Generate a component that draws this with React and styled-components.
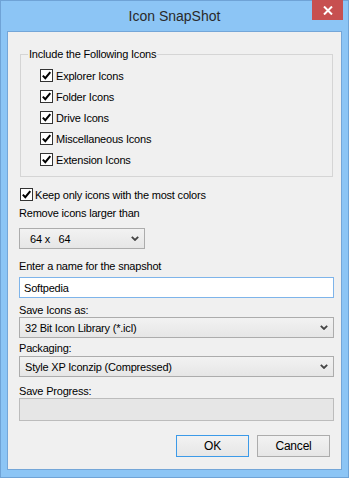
import styled, { createGlobalStyle } from "styled-components";

const Global = createGlobalStyle`
  html, body { margin: 0; padding: 0; background: #8cc5f5; }
  * { box-sizing: border-box; }
`;

const Window = styled.div`
  width: 349px;
  height: 478px;
  background: #8cc5f5;
  border: 1px solid #6fa3d6;
  display: flex;
  flex-direction: column;
  font-family: "Liberation Sans", Arial, sans-serif;
  font-size: 11px;
  letter-spacing: -0.2px;
  color: #000;
`;

const TitleBar = styled.div`
  position: relative;
  height: 30px;
  display: flex;
  align-items: center;
  justify-content: center;
  padding-bottom: 1px;
`;

const Title = styled.div`
  font-size: 14px;
  letter-spacing: 0;
  color: #2a2a2a;
`;

const Close = styled.div`
  position: absolute;
  top: -1px;
  right: 5px;
  width: 31px;
  height: 20px;
  background: #c75050;
  display: flex;
  align-items: center;
  justify-content: center;
`;

const Client = styled.div`
  width: 335px;
  height: 439px;
  margin-left: 6px;
  background: #f0f0f0;
  border: 1px solid #74a6d8;
  padding: 0 7px 0 11px;
  display: flex;
  flex-direction: column;
`;

const Group = styled.fieldset`
  margin: 15px 1px 0 1px;
  padding: 4px 0 6px 0;
  border: 1px solid #d5d5d5;
  min-width: 0;
`;

const Legend = styled.legend`
  padding: 0 1px;
  margin-left: 7px;
  line-height: 14px;
`;

const CheckRow = styled.label`
  display: flex;
  align-items: center;
  height: 21px;
  gap: ${(p) => p.$gap || 3}px;
  margin-top: ${(p) => p.$mt || 0}px;
  margin-left: ${(p) => p.$ml || 0}px;
`;

const Box = styled.span`
  width: 13px;
  height: 13px;
  border: 1px solid #333;
  background: #fff;
  display: flex;
  align-items: center;
  justify-content: center;
`;

const Label = styled.div`
  line-height: 13px;
  height: 13px;
  margin-top: ${(p) => p.$mt || 0}px;
`;

const Combo = styled.div`
  width: ${(p) => p.$w || "100%"};
  height: 21px;
  margin-top: ${(p) => p.$mt || 0}px;
  border: 1px solid #acacac;
  background: linear-gradient(#f2f2f2, #e6e6e6);
  display: flex;
  align-items: center;
  justify-content: space-between;
  padding: 0 5px 0 ${(p) => p.$pl || 5}px;
`;

const TextBox = styled.div`
  height: 21px;
  margin-top: 4px;
  border: 1px solid #7eb4ea;
  background: #fff;
  display: flex;
  align-items: center;
  padding-left: 4px;
`;

const Progress = styled.div`
  height: 23px;
  border: 1px solid #bcbcbc;
  background: #e6e6e6;
`;

const Buttons = styled.div`
  display: flex;
  justify-content: flex-end;
  gap: 8px;
  margin-top: 14px;
  padding-right: 4px;
`;

const Button = styled.div`
  width: 73px;
  height: 22px;
  border: 1px solid ${(p) => (p.$primary ? "#3c9ae8" : "#acacac")};
  background: linear-gradient(#f2f2f2, #e6e6e6);
  display: flex;
  align-items: center;
  justify-content: center;
  font-size: 12px;
`;

function Check({ children, mt, ml, gap }) {
  return (
    <CheckRow $mt={mt} $ml={ml} $gap={gap}>
      <Box>
        <svg width="11" height="11" viewBox="0 0 11 11">
          <path d="M1.8 5.6 L4.3 8.2 L9.3 2.2" fill="none" stroke="#000" strokeWidth="2" />
        </svg>
      </Box>
      {children}
    </CheckRow>
  );
}

function Chevron() {
  return (
    <svg width="8" height="5" viewBox="0 0 8 5">
      <path d="M0.8 0.8 L4 4 L7.2 0.8" fill="none" stroke="#444" strokeWidth="1.8" />
    </svg>
  );
}

export default function App() {
  return (
    <>
      <Global />
      <Window>
        <TitleBar>
          <Title>Icon SnapShot</Title>
          <Close>
            <svg width="10" height="9" viewBox="0 0 10 9">
              <path d="M1 0.5 L9 8.5 M9 0.5 L1 8.5" stroke="#fff" strokeWidth="2" />
            </svg>
          </Close>
        </TitleBar>
        <Client>
          <Group>
            <Legend>Include the Following Icons</Legend>
            <Check ml={19}>Explorer Icons</Check>
            <Check ml={19}>Folder Icons</Check>
            <Check ml={19}>Drive Icons</Check>
            <Check ml={19}>Miscellaneous Icons</Check>
            <Check ml={19}>Extension Icons</Check>
          </Group>
          <Check mt={7} ml={1} gap={2}>Keep only icons with the most colors</Check>
          <Label $mt={2}>Remove icons larger than</Label>
          <Combo $w="126px" $mt={8} $pl={10}>
            <span>64 x&nbsp;&nbsp; 64</span>
            <Chevron />
          </Combo>
          <Label $mt={11}>Enter a name for the snapshot</Label>
          <TextBox>Softpedia</TextBox>
          <Label $mt={6}>Save Icons as:</Label>
          <Combo>
            <span>32 Bit Icon Library (*.icl)</span>
            <Chevron />
          </Combo>
          <Label $mt={4}>Packaging:</Label>
          <Combo $mt={1}>
            <span>Style XP Iconzip (Compressed)</span>
            <Chevron />
          </Combo>
          <Label $mt={8}>Save Progress:</Label>
          <Progress />
          <Buttons>
            <Button $primary>OK</Button>
            <Button>Cancel</Button>
          </Buttons>
        </Client>
      </Window>
    </>
  );
}
